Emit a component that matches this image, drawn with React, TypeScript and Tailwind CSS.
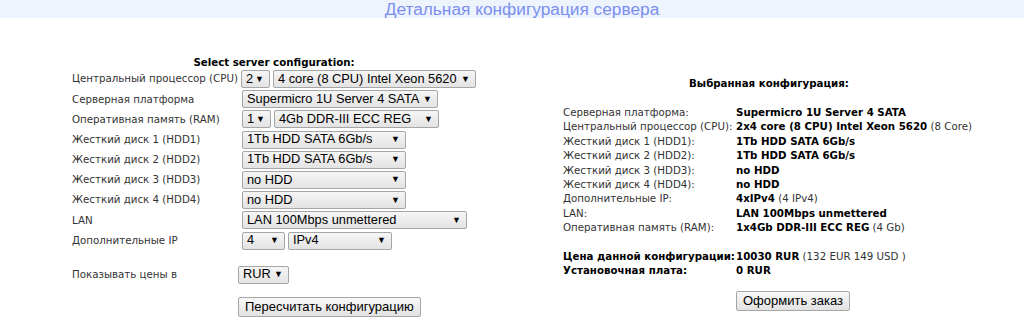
import React from 'react';

type Opt = { text: string; w: number };

const CONFIG_ROWS: { label: string; selects: Opt[] }[] = [
  { label: 'Центральный процессор (CPU)', selects: [{ text: '2', w: 29 }, { text: '4 core (8 CPU) Intel Xeon 5620', w: 203 }] },
  { label: 'Серверная платформа', selects: [{ text: 'Supermicro 1U Server 4 SATA', w: 196 }] },
  { label: 'Оперативная память (RAM)', selects: [{ text: '1', w: 29 }, { text: '4Gb DDR-III ECC REG', w: 165 }] },
  { label: 'Жесткий диск 1 (HDD1)', selects: [{ text: '1Tb HDD SATA 6Gb/s', w: 164 }] },
  { label: 'Жесткий диск 2 (HDD2)', selects: [{ text: '1Tb HDD SATA 6Gb/s', w: 164 }] },
  { label: 'Жесткий диск 3 (HDD3)', selects: [{ text: 'no HDD', w: 164 }] },
  { label: 'Жесткий диск 4 (HDD4)', selects: [{ text: 'no HDD', w: 164 }] },
  { label: 'LAN', selects: [{ text: 'LAN 100Mbps unmettered', w: 225 }] },
  { label: 'Дополнительные IP', selects: [{ text: '4', w: 43 }, { text: 'IPv4', w: 104 }] },
];

const SUMMARY: { label: string; value: string; extra?: string }[] = [
  { label: 'Серверная платформа:', value: 'Supermicro 1U Server 4 SATA' },
  { label: 'Центральный процессор (CPU):', value: '2x4 core (8 CPU) Intel Xeon 5620', extra: '(8 Core)' },
  { label: 'Жесткий диск 1 (HDD1):', value: '1Tb HDD SATA 6Gb/s' },
  { label: 'Жесткий диск 2 (HDD2):', value: '1Tb HDD SATA 6Gb/s' },
  { label: 'Жесткий диск 3 (HDD3):', value: 'no HDD' },
  { label: 'Жесткий диск 4 (HDD4):', value: 'no HDD' },
  { label: 'Дополнительные IP:', value: '4xIPv4', extra: '(4 IPv4)' },
  { label: 'LAN:', value: 'LAN 100Mbps unmettered' },
  { label: 'Оперативная память (RAM):', value: '1x4Gb DDR-III ECC REG', extra: '(4 Gb)' },
];

function FakeSelect({ text, w }: Opt) {
  return (
    <div
      className="flex h-[18px] items-center justify-between rounded-[2px] border border-[#a6a6a6] bg-gradient-to-b from-[#f6f6f6] to-[#e3e3e3] pl-[4px] pr-[5px] font-['Liberation_Sans',Arial,sans-serif] text-[12.8px] leading-none text-black"
      style={{ width: w }}
    >
      <span className="whitespace-nowrap">{text}</span>
      <span className="text-[9px] leading-none">▼</span>
    </div>
  );
}

function Button({ children }: { children: React.ReactNode }) {
  return (
    <div className="inline-flex h-[20px] items-center rounded-[2px] border border-[#a6a6a6] bg-gradient-to-b from-[#f8f8f8] to-[#e2e2e2] px-[6px] font-['Liberation_Sans',Arial,sans-serif] text-[13px] leading-none text-black">
      {children}
    </div>
  );
}

export default function App() {
  return (
    <div className="h-[331px] w-[1024px] overflow-hidden bg-white font-['DejaVu_Sans',Verdana,sans-serif] text-[10.25px] text-[#333]">
      <div className="flex h-[18px] items-center justify-center bg-[#eef4fe] pl-[20px]">
        <h1 className="font-['Liberation_Sans',Arial,sans-serif] text-[17.3px] leading-[18px] text-[#7b8ff0]">
          Детальная конфигурация сервера
        </h1>
      </div>

      <div className="flex">
        <div className="ml-[72px] mt-[37px] w-[404px]">
          <div className="text-center font-bold leading-[14px] text-black">Select server configuration:</div>
          <div className="mt-[1px] flex flex-col gap-[2.2px]">
            {CONFIG_ROWS.map((row) => (
              <div key={row.label} className="flex h-[18px] items-center">
                <div className="w-[170px] whitespace-nowrap">{row.label}</div>
                <div className="flex gap-[3px]">
                  {row.selects.map((s) => (
                    <FakeSelect key={s.text} {...s} />
                  ))}
                </div>
              </div>
            ))}
          </div>
          <div className="mt-[16px] flex h-[18px] items-center">
            <div className="w-[166px]">Показывать цены в</div>
            <FakeSelect text="RUR" w={51} />
          </div>
          <div className="mt-[13px] pl-[166px]">
            <Button>Пересчитать конфигурацию</Button>
          </div>
        </div>

        <div className="ml-[87px] mt-[58px] w-[412px]">
          <div className="text-center font-bold leading-[14px] text-black">Выбранная конфигурация:</div>
          <div className="mt-[15px] leading-[14.4px]">
            {SUMMARY.map((r) => (
              <div key={r.label} className="flex">
                <div className="w-[173px] whitespace-nowrap">{r.label}</div>
                <div className="whitespace-nowrap">
                  <span className="font-bold text-black">{r.value}</span>
                  {r.extra && <span> {r.extra}</span>}
                </div>
              </div>
            ))}
            <div className="h-[14.4px]" />
            <div className="flex">
              <div className="w-[173px] whitespace-nowrap font-bold text-black">Цена данной конфигурации:</div>
              <div className="whitespace-nowrap">
                <span className="font-bold text-black">10030 RUR</span> (132 EUR 149 USD )
              </div>
            </div>
            <div className="flex">
              <div className="w-[173px] whitespace-nowrap font-bold text-black">Установочная плата:</div>
              <div className="font-bold text-black">0 RUR</div>
            </div>
          </div>
          <div className="mt-[13px] pl-[173px]">
            <Button>Оформить заказ</Button>
          </div>
        </div>
      </div>
    </div>
  );
}
